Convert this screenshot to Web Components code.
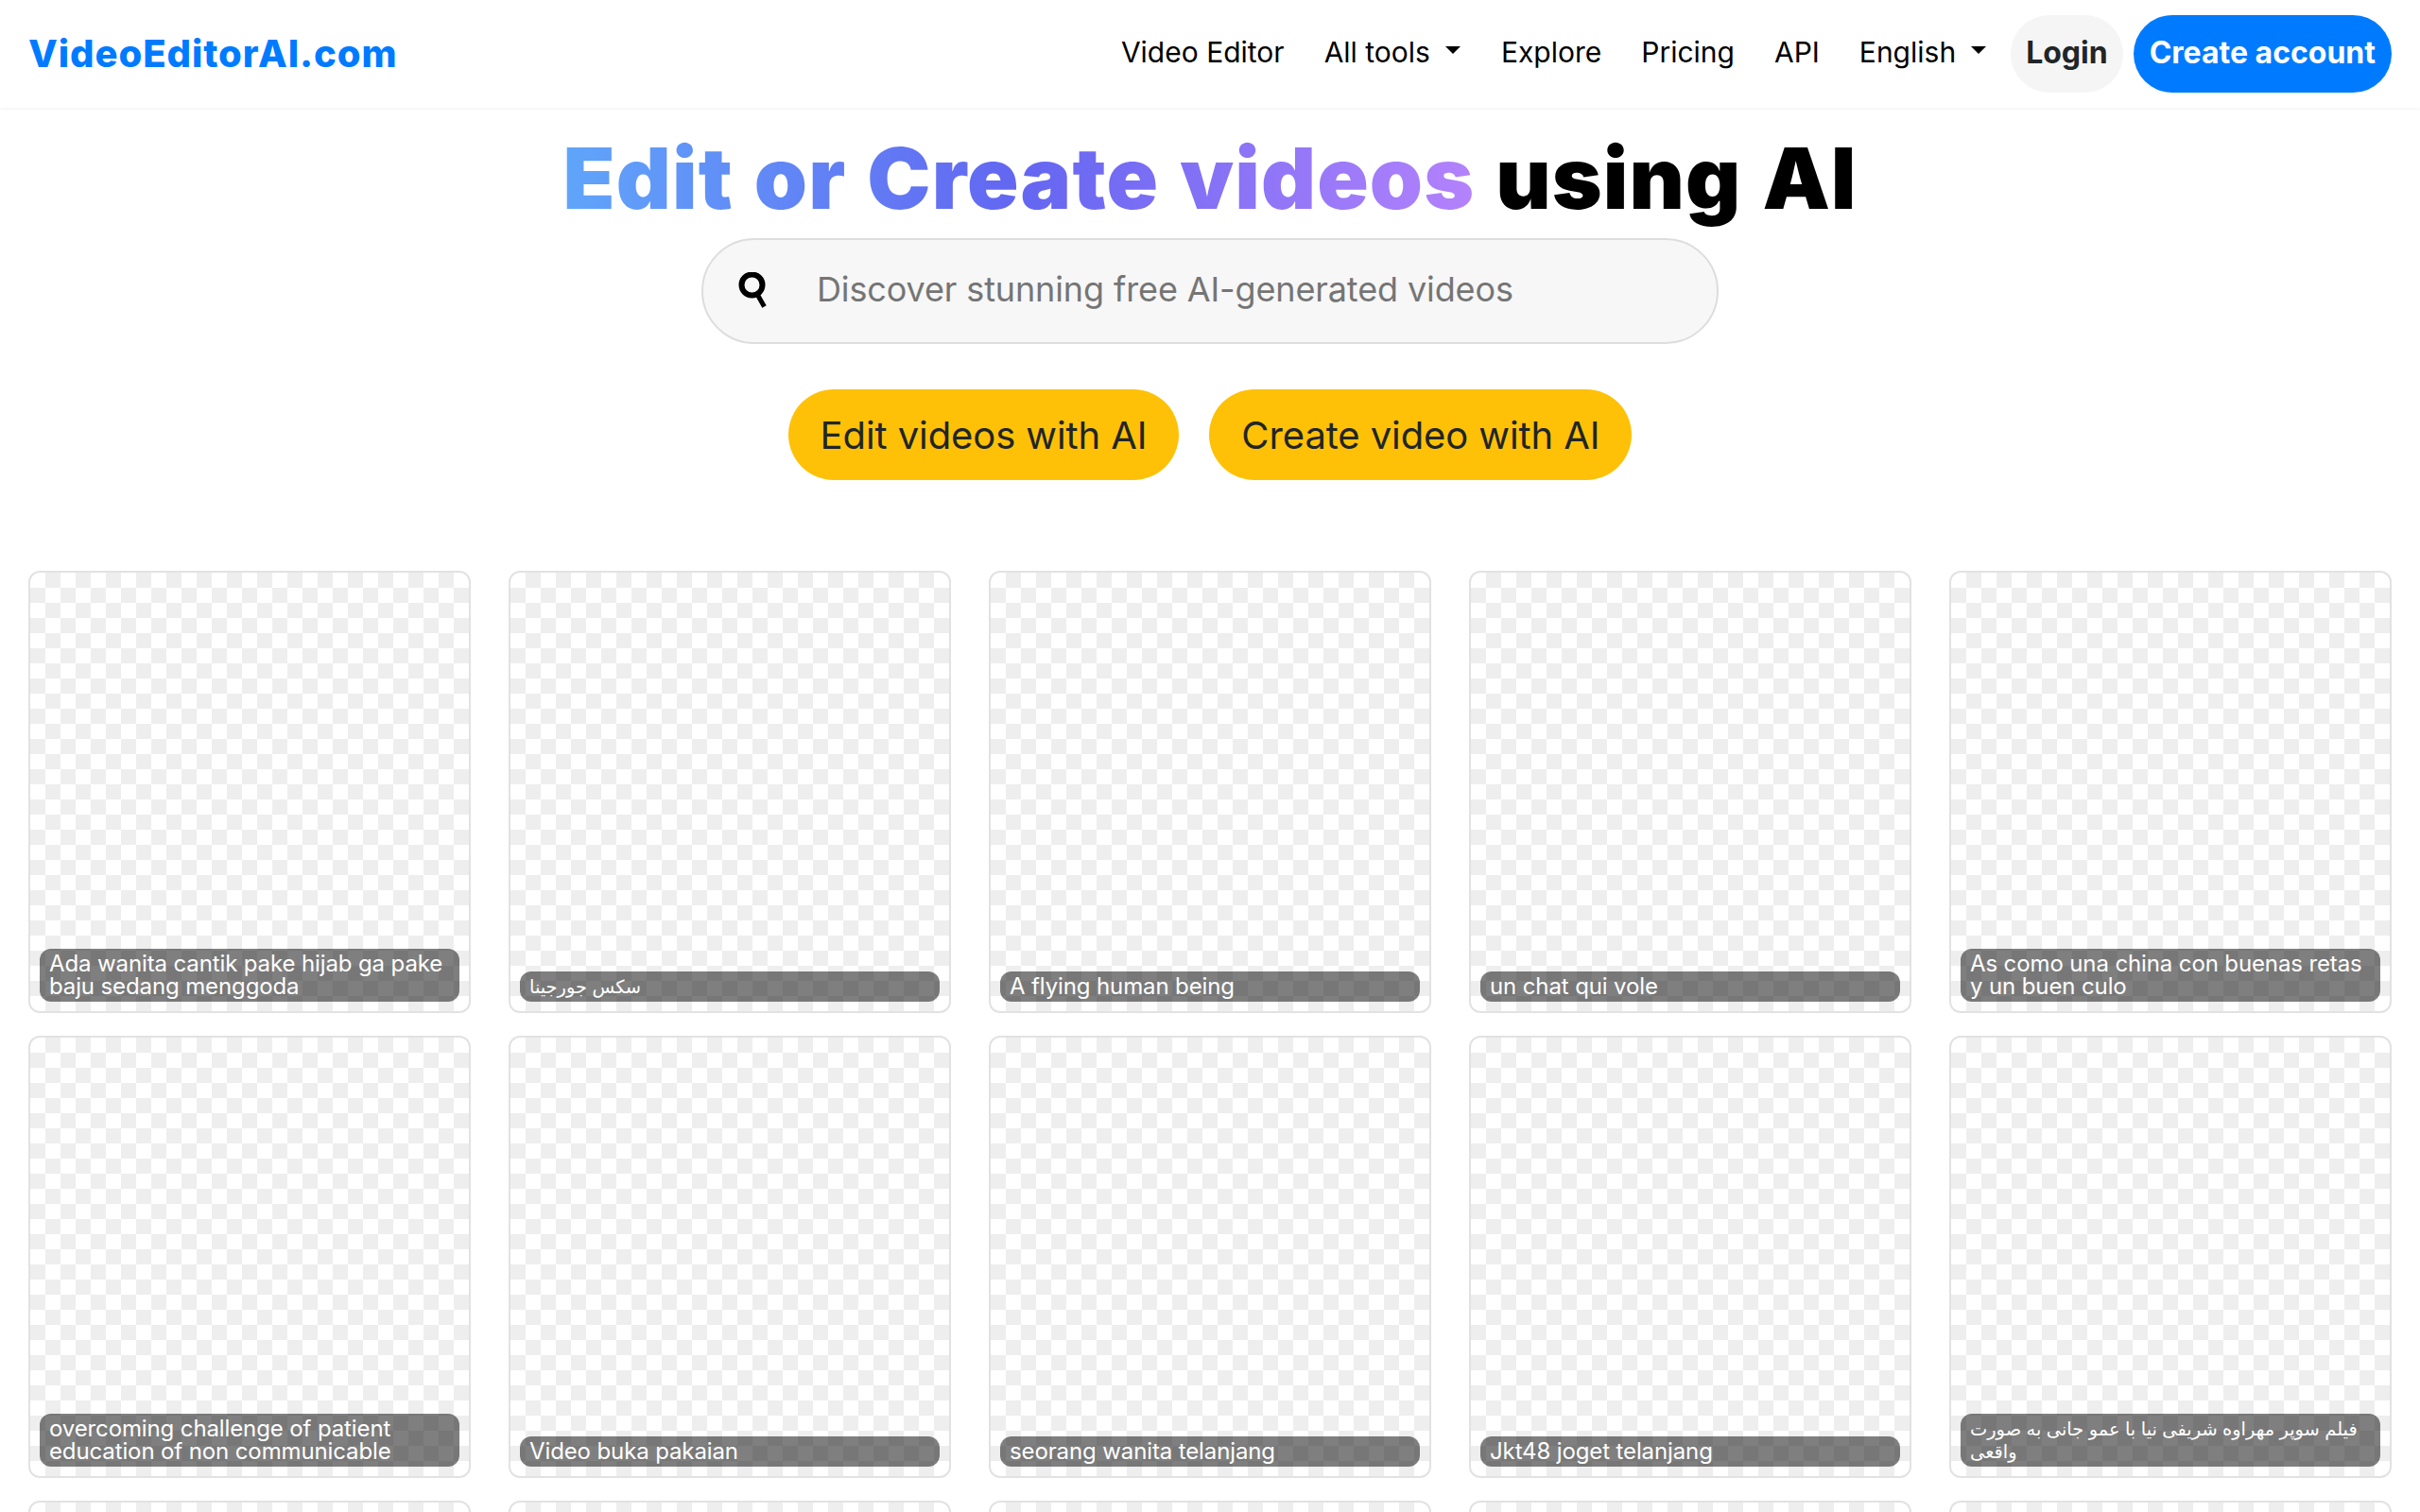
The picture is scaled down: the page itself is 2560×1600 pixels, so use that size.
<!DOCTYPE html>
<html lang="en">
<head>
<meta charset="utf-8">
<title>VideoEditorAI.com</title>
<style>
  html, body { margin: 0; height: 1600px; overflow: hidden; background: #fff; }
  body { font-family: Inter, "DejaVu Sans", "Noto Sans", sans-serif; color: #000; }
</style>
</head>
<body>
<site-header></site-header>
<hero-section></hero-section>
<video-grid>
  <video-card caption="Ada wanita cantik pake hijab ga pake baju sedang menggoda"></video-card>
  <video-card persian caption="سکس جورجینا"></video-card>
  <video-card caption="A flying human being"></video-card>
  <video-card caption="un chat qui vole"></video-card>
  <video-card caption="As como una china con buenas retas y un buen culo"></video-card>
  <video-card caption="overcoming challenge of patient education of non communicable"></video-card>
  <video-card caption="Video buka pakaian"></video-card>
  <video-card caption="seorang wanita telanjang"></video-card>
  <video-card caption="Jkt48 joget telanjang"></video-card>
  <video-card persian caption="فیلم سوپر مهراوه شریفی نیا با عمو جانی به صورت واقعی"></video-card>
  <video-card></video-card>
  <video-card></video-card>
  <video-card></video-card>
  <video-card></video-card>
  <video-card></video-card>
</video-grid>

<script>
class NavItem extends HTMLElement {
  constructor() {
    super();
    this.attachShadow({ mode: "open" });
    this.shadowRoot.innerHTML = `
      <style>
        :host { display: block; padding: 0 21px 4px; font-size: 30px; line-height: 45px; color: #000; white-space: nowrap; }
        .caret {
          display: none;
          width: 0;
          height: 0;
          margin: 0 1px 0 16px;
          vertical-align: 9px;
          border-top: 8px solid #000;
          border-left: 8px solid transparent;
          border-right: 8px solid transparent;
        }
        :host([dropdown]) .caret { display: inline-block; }
      </style>
      <slot></slot><span class="caret"></span>
    `;
  }
}

class SiteHeader extends HTMLElement {
  constructor() {
    super();
    this.attachShadow({ mode: "open" });
    this.shadowRoot.innerHTML = `
      <style>
        :host {
          display: flex;
          align-items: center;
          justify-content: space-between;
          height: 114px;
          padding: 0 30px;
          box-sizing: border-box;
          background: #fff;
          box-shadow: 0 1px 4px rgba(0, 0, 0, 0.06);
        }
        .logo { font-size: 40px; font-weight: 800; color: #007bff; letter-spacing: 0.95px; padding-bottom: 2px; }
        nav { display: flex; align-items: center; }
        .login, .signup {
          display: flex;
          align-items: center;
          height: 82px;
          padding-bottom: 3px;
          border-radius: 41px;
          font-size: 32px;
          font-weight: 700;
          box-sizing: border-box;
        }
        .login { margin-left: 4px; padding-left: 16px; padding-right: 16px; background: #f5f5f5; color: #212529; }
        .signup { margin-left: 11px; padding-left: 17px; padding-right: 17px; background: #007bff; color: #fff; }
      </style>
      <div class="logo">VideoEditorAI.com</div>
      <nav>
        <nav-item>Video Editor</nav-item>
        <nav-item dropdown>All tools</nav-item>
        <nav-item>Explore</nav-item>
        <nav-item>Pricing</nav-item>
        <nav-item>API</nav-item>
        <nav-item dropdown>English</nav-item>
        <div class="login">Login</div>
        <div class="signup">Create account</div>
      </nav>
    `;
  }
}

class SearchBox extends HTMLElement {
  constructor() {
    super();
    this.attachShadow({ mode: "open" });
    this.shadowRoot.innerHTML = `
      <style>
        :host {
          display: flex;
          align-items: center;
          width: 1076px;
          height: 112px;
          padding-left: 37px;
          box-sizing: border-box;
          background: #f7f7f7;
          border: 2px solid #ddd;
          border-radius: 56px;
        }
        svg { width: 35px; height: 40px; flex: none; }
        .placeholder { margin-left: 48px; padding-bottom: 5px; font-size: 36px; letter-spacing: -0.12px; color: #757575; white-space: nowrap; }
      </style>
      <svg viewBox="0 0 35 40" fill="none" stroke="#000" stroke-width="6">
        <circle cx="14.5" cy="13.5" r="11"></circle>
        <path d="M21 25l6.5 11.5" stroke-width="5"></path>
      </svg>
      <span class="placeholder"><slot></slot></span>
    `;
  }
}

class PillButton extends HTMLElement {
  constructor() {
    super();
    this.attachShadow({ mode: "open" });
    this.shadowRoot.innerHTML = `
      <style>
        :host {
          display: flex;
          align-items: center;
          height: 96px;
          padding: 0 34px;
          background: #ffc107;
          color: #212529;
          font-size: 40px;
          letter-spacing: -0.1px;
          border-radius: 48px;
          white-space: nowrap;
        }
      </style>
      <slot></slot>
    `;
  }
}

class HeroSection extends HTMLElement {
  constructor() {
    super();
    this.attachShadow({ mode: "open" });
    this.shadowRoot.innerHTML = `
      <style>
        :host { display: flex; flex-direction: column; align-items: center; }
        h1 { margin: 22px 0 0; font-size: 90px; line-height: 106px; font-weight: 900; letter-spacing: 1.1px; word-spacing: 3px; color: #000; white-space: nowrap; }
        .gradient {
          background: linear-gradient(90deg, #60a5fa, #6366f1 50%, #b482fc);
          -webkit-background-clip: text;
          background-clip: text;
          color: transparent;
        }
        search-box { margin-top: 10px; }
        .actions { display: flex; gap: 32px; margin-top: 48px; }
      </style>
      <h1><span class="gradient">Edit or Create videos</span> using AI</h1>
      <search-box>Discover stunning free AI-generated videos</search-box>
      <div class="actions">
        <pill-button>Edit videos with AI</pill-button>
        <pill-button>Create video with AI</pill-button>
      </div>
    `;
  }
}

class VideoCard extends HTMLElement {
  constructor() {
    super();
    this.attachShadow({ mode: "open" });
    this.shadowRoot.innerHTML = `
      <style>
        :host {
          display: block;
          position: relative;
          height: 468px;
          box-sizing: border-box;
          border: 2px solid #e2e2e2;
          border-radius: 12px;
          background-color: #fff;
          background-image: conic-gradient(#eee 25%, #fff 0 50%, #eee 0 75%, #fff 0);
          background-size: 32px 32px;
          background-origin: padding-box;
          overflow: hidden;
        }
        .caption {
          position: absolute;
          left: 10px;
          right: 10px;
          bottom: 10px;
          padding: 4px 10px;
          background: rgba(0, 0, 0, 0.5);
          border-radius: 12px;
          color: #fff;
          font-size: 24px;
          letter-spacing: -0.12px;
          line-height: 24px;
        }
        :host([persian]) .caption { font-size: 19.4px; letter-spacing: normal; }
      </style>
    `;
  }

  connectedCallback() {
    const text = this.getAttribute("caption");
    if (text && !this.shadowRoot.querySelector(".caption")) {
      const caption = document.createElement("div");
      caption.className = "caption";
      caption.textContent = text;
      this.shadowRoot.appendChild(caption);
    }
  }
}

class VideoGrid extends HTMLElement {
  constructor() {
    super();
    this.attachShadow({ mode: "open" });
    this.shadowRoot.innerHTML = `
      <style>
        :host {
          display: grid;
          grid-template-columns: repeat(5, 468px);
          column-gap: 40px;
          row-gap: 24px;
          padding: 96px 30px 0;
        }
      </style>
      <slot></slot>
    `;
  }
}

customElements.define("nav-item", NavItem);
customElements.define("site-header", SiteHeader);
customElements.define("search-box", SearchBox);
customElements.define("pill-button", PillButton);
customElements.define("hero-section", HeroSection);
customElements.define("video-card", VideoCard);
customElements.define("video-grid", VideoGrid);
</script>
</body>
</html>
